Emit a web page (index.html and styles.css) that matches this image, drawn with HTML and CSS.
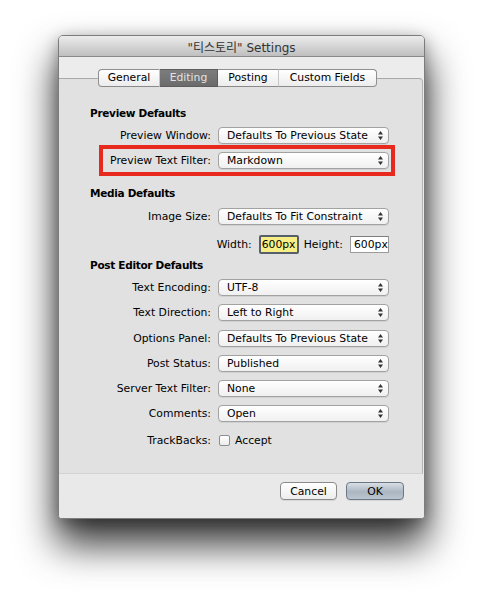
FILE: index.html
```html
<!DOCTYPE html>
<html>
<head>
<meta charset="utf-8">
<link rel="stylesheet" href="styles.css">
</head>
<body>
<div class="stage">
<div class="window">
  <div class="titlebar"><span class="title">"티스토리" Settings</span></div>
  <div class="content">
    <div class="tabs">
      <span class="tab t-gen">General</span><span class="tab t-edit sel">Editing</span><span class="tab t-post">Posting</span><span class="tab t-cf">Custom Fields</span>
    </div>
    <div class="box">
      <div class="heading">Preview Defaults</div>
      <div class="row r-pw"><span class="label">Preview Window:</span><span class="popup"><span>Defaults To Previous State</span><svg class="arr" width="5" height="9" viewBox="0 0 5 9"><path d="M0 3.6 2.5 0 5 3.6Z M0 5.4 5 5.4 2.5 9Z" fill="#333"/></svg></span></div>
      <div class="row r-ptf highlight"><span class="label">Preview Text Filter:</span><span class="popup"><span>Markdown</span><svg class="arr" width="5" height="9" viewBox="0 0 5 9"><path d="M0 3.6 2.5 0 5 3.6Z M0 5.4 5 5.4 2.5 9Z" fill="#333"/></svg></span></div>
      <div class="heading h-md">Media Defaults</div>
      <div class="row r-is"><span class="label">Image Size:</span><span class="popup"><span>Defaults To Fit Constraint</span><svg class="arr" width="5" height="9" viewBox="0 0 5 9"><path d="M0 3.6 2.5 0 5 3.6Z M0 5.4 5 5.4 2.5 9Z" fill="#333"/></svg></span></div>
      <div class="row r-wh">
        <div class="dims">
          <span class="dim-label">Width:</span><span class="field focus">600px</span>
          <span class="dim-label">Height:</span><span class="field">600px</span>
        </div>
      </div>
      <div class="heading h-ped">Post Editor Defaults</div>
      <div class="row r-te"><span class="label">Text Encoding:</span><span class="popup"><span>UTF-8</span><svg class="arr" width="5" height="9" viewBox="0 0 5 9"><path d="M0 3.6 2.5 0 5 3.6Z M0 5.4 5 5.4 2.5 9Z" fill="#333"/></svg></span></div>
      <div class="row"><span class="label">Text Direction:</span><span class="popup"><span>Left to Right</span><svg class="arr" width="5" height="9" viewBox="0 0 5 9"><path d="M0 3.6 2.5 0 5 3.6Z M0 5.4 5 5.4 2.5 9Z" fill="#333"/></svg></span></div>
      <div class="row r-op"><span class="label">Options Panel:</span><span class="popup"><span>Defaults To Previous State</span><svg class="arr" width="5" height="9" viewBox="0 0 5 9"><path d="M0 3.6 2.5 0 5 3.6Z M0 5.4 5 5.4 2.5 9Z" fill="#333"/></svg></span></div>
      <div class="row"><span class="label">Post Status:</span><span class="popup"><span>Published</span><svg class="arr" width="5" height="9" viewBox="0 0 5 9"><path d="M0 3.6 2.5 0 5 3.6Z M0 5.4 5 5.4 2.5 9Z" fill="#333"/></svg></span></div>
      <div class="row"><span class="label">Server Text Filter:</span><span class="popup"><span>None</span><svg class="arr" width="5" height="9" viewBox="0 0 5 9"><path d="M0 3.6 2.5 0 5 3.6Z M0 5.4 5 5.4 2.5 9Z" fill="#333"/></svg></span></div>
      <div class="row"><span class="label">Comments:</span><span class="popup"><span>Open</span><svg class="arr" width="5" height="9" viewBox="0 0 5 9"><path d="M0 3.6 2.5 0 5 3.6Z M0 5.4 5 5.4 2.5 9Z" fill="#333"/></svg></span></div>
      <div class="row r-tb"><span class="label">TrackBacks:</span><span class="check"><span class="box-check"></span><span>Accept</span></span></div>
    </div>
    <div class="footer">
      <button class="btn">Cancel</button><button class="btn ok">OK</button>
    </div>
  </div>
</div>
</div>
</body>
</html>
```
FILE: styles.css
```css
html {
  background: #fff;
}

body {
  margin: 0;
  min-height: 600px;
  background: #fff;
  font-family: "DejaVu Sans", "Noto Sans CJK KR", sans-serif;
  font-size: 10.8px;
  color: #000;
}

.stage {
  padding: 35px 0 0 58px;
  min-height: 565px;
}

.window {
  width: 367px;
  box-sizing: border-box;
  border: 1px solid #7c7c7c;
  border-radius: 5px 5px 4px 4px;
  box-shadow: 0 24px 38px 2px rgba(0, 0, 0, 0.78), 0 4px 16px rgba(0, 0, 0, 0.3);
  background: #e9e9e9;
}

.titlebar {
  height: 21px;
  box-sizing: border-box;
  border-bottom: 1px solid #8a8a8a;
  border-radius: 4px 4px 0 0;
  background: linear-gradient(#ececec, #bfbfbf);
  display: flex;
  align-items: center;
  justify-content: center;
  font-size: 12px;
  color: #333;
}

.title {
  padding-top: 1px;
}

.content {
  background: #ececec;
  border-radius: 0 0 3px 3px;
}

.tabs {
  display: flex;
  margin-left: 39px;
  padding-top: 12px;
  position: relative;
  z-index: 1;
}

.tab {
  height: 18px;
  box-sizing: border-box;
  line-height: 16px;
  text-align: center;
  border-top: 1px solid #8f8f8f;
  border-bottom: 1px solid #8a8a8a;
  border-right: 1px solid #c6c6c6;
  background: linear-gradient(#ffffff, #ececec);
  color: #000;
}

.t-gen { width: 62px; }
.t-edit { width: 58px; }
.t-post { width: 61px; }
.t-cf { width: 98px; }

.tab:first-child {
  border-left: 1px solid #8f8f8f;
  border-radius: 4px 0 0 4px;
}

.tab:last-child {
  border-right: 1px solid #8f8f8f;
  border-radius: 0 4px 4px 0;
}

.tab.sel {
  background: linear-gradient(#7d7d7d, #6b6b6b);
  color: #e2e2e2;
  border-color: #5d5d5d;
}

.box {
  margin-top: -9px;
  margin-right: 1px;
  background: #e1e1e1;
  border-top: 1px solid #a8a8a8;
  border-right: 1px solid #b3b3b3;
  border-bottom: 1px solid #d3d3d3;
  border-radius: 0 4px 0 0;
  padding: 26px 0 23px;
  display: flex;
  flex-direction: column;
}

.heading {
  height: 16px;
  line-height: 16px;
  margin-left: 31px;
  font-size: 10.5px;
  font-weight: bold;
  letter-spacing: -0.3px;
}

.row {
  display: grid;
  grid-template-columns: 152px 171px;
  column-gap: 7px;
  align-items: center;
  height: 20px;
  margin-top: 5px;
}

.r-pw { margin-top: 4px; }
.h-md { margin-top: 15px; }
.r-is { margin-top: 5px; }
.r-wh { margin-top: 8px; }
.h-ped { margin-top: 3px; }
.r-te { margin-top: 4px; }
.r-op { margin-top: 6px; }
.r-tb { margin-top: 7px; }

.label {
  text-align: right;
  white-space: nowrap;
}

.popup {
  height: 17px;
  box-sizing: border-box;
  border: 1px solid #a2a2a2;
  border-radius: 4px;
  background: linear-gradient(#ffffff, #f0f0f0);
  box-shadow: 0 1px 0 rgba(0, 0, 0, 0.07);
  display: flex;
  align-items: center;
  justify-content: space-between;
  padding: 0 5px 0 8px;
  white-space: nowrap;
}

.arr {
  display: block;
}

.highlight {
  position: relative;
}

.highlight::before {
  content: "";
  position: absolute;
  left: 40px;
  top: -5px;
  width: 296px;
  height: 31px;
  box-sizing: border-box;
  border: 4px solid #e8291d;
}

.dims {
  grid-column: 1 / -1;
  display: flex;
  align-items: center;
  justify-content: flex-end;
}

.dim-label {
  margin-right: 7px;
}

.field {
  height: 17px;
  width: 39px;
  box-sizing: border-box;
  border: 1px solid #9b9b9b;
  border-top-color: #7d7d7d;
  background: #fff;
  padding-left: 3px;
  line-height: 15px;
  margin-right: 5px;
}

.field:last-child {
  margin-right: 0;
}

.field.focus {
  width: 40px;
  height: 19px;
  border: 2px solid #56606b;
  border-radius: 2px;
  background: #f7ef85;
  padding-left: 1px;
  line-height: 15px;
}

.check {
  display: flex;
  align-items: center;
  margin-left: 1px;
}

.box-check {
  width: 11px;
  height: 11px;
  box-sizing: border-box;
  border: 1px solid #8e8e8e;
  border-radius: 2px;
  background: linear-gradient(#ffffff, #ececec);
  margin-right: 5px;
}

.footer {
  display: flex;
  justify-content: flex-end;
  gap: 9px;
  padding: 8px 20px 0 0;
  height: 44px;
  box-sizing: border-box;
  background: #e9e9e9;
  border-radius: 0 0 3px 3px;
}

.btn {
  height: 18px;
  width: 57px;
  padding: 0;
  font: inherit;
  color: #000;
  border: 1px solid #8b8b8b;
  border-radius: 4px;
  background: linear-gradient(#ffffff, #ededed);
  box-shadow: 0 1px 0 rgba(0, 0, 0, 0.08);
}

.btn.ok {
  width: 58px;
  border-color: #6c7885;
  background: linear-gradient(#d8dfe6, #aab6c1 55%, #bcc6cf);
}
```
